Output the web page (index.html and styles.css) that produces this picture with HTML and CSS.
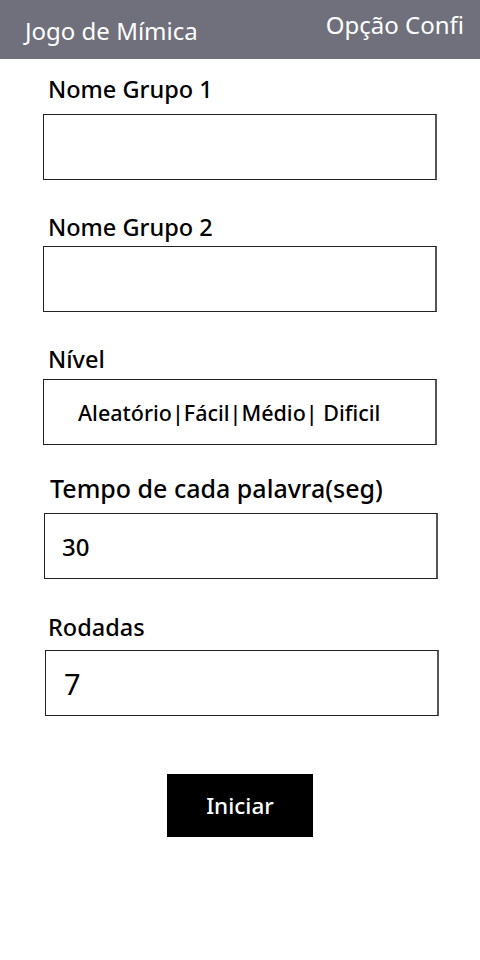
FILE: index.html
```html
<!DOCTYPE html>
<html lang="pt">
<head>
<meta charset="utf-8">
<title>Jogo de Mímica</title>
<link rel="stylesheet" href="styles.css">
</head>
<body>
<header class="appbar">
  <span class="appbar-title">Jogo de Mímica</span>
  <span class="appbar-action">Opção Confi</span>
</header>
<main class="form">
  <div class="field field-g1">
    <div class="label">Nome Grupo 1</div>
    <div class="box"></div>
  </div>
  <div class="field field-g2">
    <div class="label">Nome Grupo 2</div>
    <div class="box"></div>
  </div>
  <div class="field field-level">
    <div class="label">Nível</div>
    <div class="box box-level">Aleatório|Fácil|Médio| Dificil</div>
  </div>
  <div class="field field-time">
    <div class="label">Tempo de cada palavra(seg)</div>
    <div class="box box-time">30</div>
  </div>
  <div class="field field-rounds">
    <div class="label">Rodadas</div>
    <div class="box box-rounds">7</div>
  </div>
  <div class="actions">
    <button class="start">Iniciar</button>
  </div>
</main>
</body>
</html>
```
FILE: styles.css
```css
* { box-sizing: border-box; }
html, body { margin: 0; padding: 0; background: #ffffff; }
body {
  width: 480px;
  height: 960px;
  font-family: "Noto Sans", "Open Sans", sans-serif;
  color: #000;
}
.appbar {
  height: 59px;
  background: #70707c;
  color: #ffffff;
  display: flex;
  justify-content: space-between;
  padding: 0 16px 0 25px;
}
.appbar-title {
  font-size: 24px;
  line-height: 22px;
  margin-top: 20px;
  white-space: nowrap;
}
.appbar-action {
  font-size: 24px;
  line-height: 22px;
  margin-top: 14px;
  white-space: nowrap;
}
.form {
  display: flex;
  flex-direction: column;
  padding-left: 43px;
}
.field { display: flex; flex-direction: column; }
.label {
  font-size: 23.5px;
  font-weight: 500;
  line-height: 24px;
  height: 24px;
  padding-left: 5px;
  white-space: nowrap;
}
.box {
  width: 394px;
  height: 66px;
  border: 1px solid #222;
  border-right: 2px solid #555;
  display: flex;
  align-items: center;
  font-size: 21.5px;
  font-weight: 500;
  white-space: nowrap;
}
.field-g1 { margin-top: 18px; }
.field-g1 .label { margin-bottom: 13px; }
.field-g2 { margin-top: 35px; }
.field-g2 .label { margin-bottom: 7px; }
.field-level { margin-top: 35px; }
.field-level .label { margin-bottom: 8px; }
.field-time { margin-top: 31px; padding-left: 1px; }
.field-time .label { margin-bottom: 13px; padding-left: 6px; font-size: 25px; }
.field-rounds { margin-top: 36px; padding-left: 2px; }
.field-rounds .label { margin-bottom: 11px; padding-left: 3px; }
.box-level { padding-left: 34px; }
.box-time { padding-left: 17px; font-size: 24px; }
.box-rounds { padding-left: 18px; font-size: 29px; font-weight: 400; }
.actions {
  display: flex;
  justify-content: center;
  padding-right: 43px;
  margin-top: 58px;
}
.start {
  width: 146px;
  height: 63px;
  background: #000;
  color: #fff;
  border: none;
  border-radius: 0;
  font-family: "Noto Sans", "Open Sans", sans-serif;
  font-size: 22.5px;
  font-weight: 500;
  padding: 0;
}
```
